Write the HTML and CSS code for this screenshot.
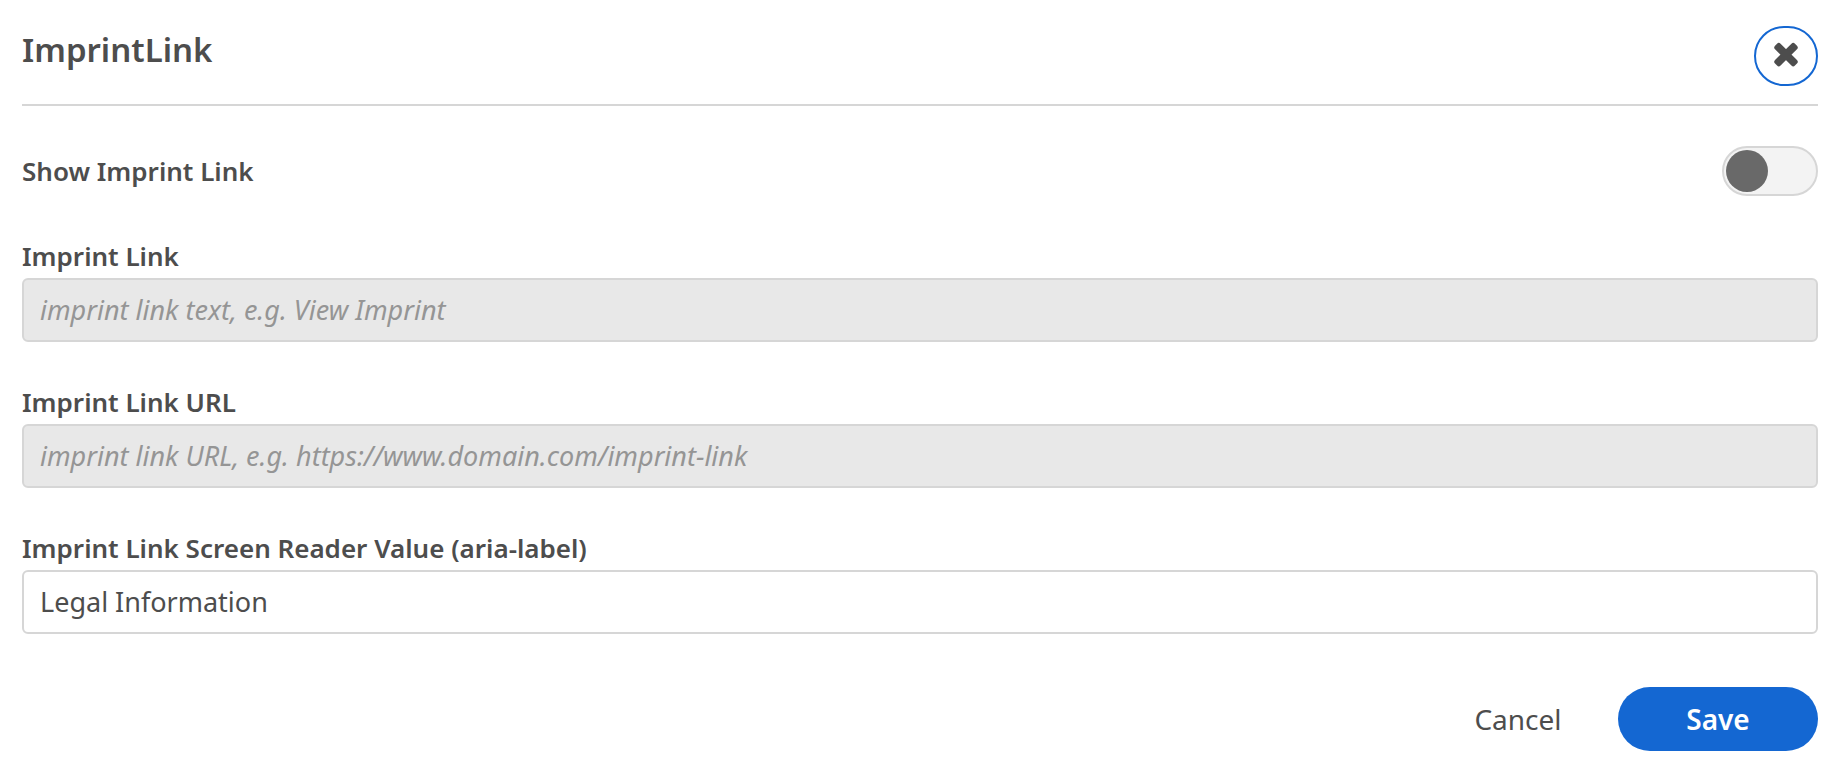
FILE: index.html
```html
<!DOCTYPE html>
<html lang="en">
<head>
<meta charset="utf-8">
<title>ImprintLink</title>
<link rel="stylesheet" href="styles.css">
</head>
<body>
<form class="panel">
  <header class="panel-header">
    <h1 class="title">ImprintLink</h1>
    <button class="close" type="button" aria-label="Close">
      <svg viewBox="0 0 28 28" width="28" height="28" aria-hidden="true"><path d="M3.8 5.1L5.8 3.1L22.2 19.5L20.2 21.5ZM20.2 3.1L22.2 5.1L5.8 21.5L3.8 19.5Z" transform="translate(1 .3)" fill="currentColor" stroke="currentColor" stroke-width="5" stroke-linejoin="round"/></svg>
    </button>
  </header>
  <div class="toggle-row">
    <label class="label" for="show">Show Imprint Link</label>
    <input class="switch" id="show" type="checkbox" role="switch">
  </div>
  <div class="field">
    <label class="label" for="text">Imprint Link</label>
    <input class="input" id="text" type="text" placeholder="imprint link text, e.g. View Imprint" disabled>
  </div>
  <div class="field">
    <label class="label" for="url">Imprint Link URL</label>
    <input class="input" id="url" type="text" placeholder="imprint link URL, e.g. https://www.domain.com/imprint-link" disabled>
  </div>
  <div class="field">
    <label class="label" for="aria">Imprint Link Screen Reader Value (aria-label)</label>
    <input class="input" id="aria" type="text" value="Legal Information">
  </div>
  <footer class="actions">
    <button class="button" type="button">Cancel</button>
    <button class="button primary" type="submit">Save</button>
  </footer>
</form>
</body>
</html>
```
FILE: styles.css
```css
* { box-sizing: border-box; }
body { margin: 0; background: #fff; color: #4d4d4d; font-family: "Noto Sans", sans-serif; }
.panel { padding: 26px 24px 16px 22px; }
.panel-header { display: flex; justify-content: space-between; align-items: flex-start; padding-bottom: 18px; border-bottom: 2px solid #d6d6d6; }
.title { margin: 0; font-size: 33px; line-height: 48px; font-weight: 600; }
.close { display: grid; place-items: center; width: 64px; height: 60px; padding: 0; border: 2px solid #1467d2; border-radius: 32px; background: #fff; color: #4d4d4d; }
.toggle-row { display: flex; justify-content: space-between; align-items: center; margin-top: 40px; }
.label { font-size: 26px; line-height: 36px; font-weight: 600; }
.switch { appearance: none; width: 96px; height: 50px; margin: 0; padding: 2px; border: 2px solid #d6d6d6; border-radius: 25px; background: #f3f3f3; }
.switch::before { content: ""; display: block; width: 42px; height: 42px; border-radius: 50%; background: #696969; }
.switch:checked::before { margin-left: auto; }
.field { display: flex; flex-direction: column; gap: 4px; margin-top: 42px; }
.input { width: 100%; height: 64px; padding: 0 16px 2px; border: 2px solid #d6d6d6; border-radius: 6px; background: #fff; color: #4d4d4d; font: 400 27px "Noto Sans", sans-serif; }
.input:disabled { background: #e8e8e8; font-style: italic; }
.input::placeholder { color: #959595; opacity: 1; }
.actions { display: flex; justify-content: flex-end; margin-top: 53px; }
.button { width: 200px; height: 64px; padding: 0; border: 0; border-radius: 32px; background: transparent; color: #4d4d4d; font: 400 28px "Noto Sans", sans-serif; }
.primary { background: #1467d2; color: #fff; font-weight: 600; }
```
